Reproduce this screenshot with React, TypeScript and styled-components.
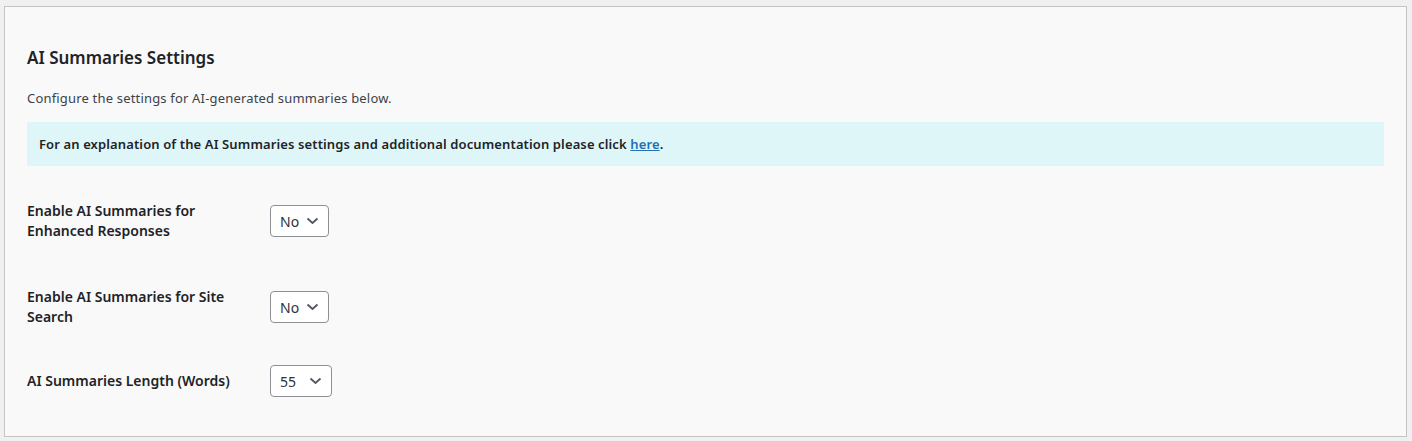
import React from "react";
import styled, { createGlobalStyle } from "styled-components";

const GlobalStyle = createGlobalStyle`
  html, body {
    margin: 0;
    padding: 0;
    background: #f0f0f1;
  }
  body {
    font-family: "Noto Sans", "Liberation Sans", sans-serif;
    color: #3c434a;
  }
`;

const Panel = styled.div`
  box-sizing: border-box;
  height: 431px;
  margin: 6px 5px 4px 4px;
  padding: 0 22px;
  background: #f9f9f9;
  border: 1px solid #c3c4c7;
`;

const Title = styled.h2`
  margin: 0;
  padding-top: 39px;
  font-size: 17px;
  line-height: 24px;
  font-weight: 600;
  color: #1d2327;
`;

const Intro = styled.p`
  margin: 18px 0 0;
  font-size: 13px;
  line-height: 20px;
  letter-spacing: 0.18px;
  color: #3c434a;
`;

const Notice = styled.div`
  margin-top: 14px;
  padding: 12px 12px;
  background: #dff6f9;
  font-size: 13px;
  line-height: 20px;
  letter-spacing: 0.12px;
  font-weight: 600;
  color: #1d2327;

  a {
    color: #2271b1;
    text-decoration: underline;
  }
`;

const Form = styled.div`
  padding-top: 35px;
`;

const Row = styled.div<{ $space: number }>`
  display: grid;
  grid-template-columns: 232px auto;
  column-gap: 11px;
  align-items: center;
  justify-content: start;
  min-height: 40px;
  margin-top: ${(p) => p.$space}px;
`;

const Label = styled.label`
  font-size: 14px;
  line-height: 20px;
  font-weight: 600;
  color: #1d2327;
`;

const LabelText = styled.span<{ $wrap: number }>`
  display: block;
  max-width: ${(p) => p.$wrap}px;
`;

const Select = styled.div<{ $width: number }>`
  box-sizing: border-box;
  display: inline-flex;
  align-items: center;
  justify-content: space-between;
  width: ${(p) => p.$width}px;
  height: 32px;
  padding: 0 9px 0 9px;
  background: #fff;
  border: 1px solid #8c8f94;
  border-radius: 4px;
  font-size: 14px;
  color: #2c3338;
  cursor: pointer;
`;

const Chevron = () => (
  <svg width="13" height="8" viewBox="0 0 13 8" fill="none">
    <path d="M1.5 1.5 L6.5 6 L11.5 1.5" stroke="#50575e" strokeWidth="1.8" />
  </svg>
);

const settings = [
  { label: "Enable AI Summaries for Enhanced Responses", value: "No", width: 59, space: 0, wrap: 200 },
  { label: "Enable AI Summaries for Site Search", value: "No", width: 59, space: 46, wrap: 210 },
  { label: "AI Summaries Length (Words)", value: "55", width: 62, space: 34, wrap: 232 },
];

export default function App() {
  return (
    <>
      <GlobalStyle />
      <Panel>
        <Title>AI Summaries Settings</Title>
        <Intro>Configure the settings for AI-generated summaries below.</Intro>
        <Notice>
          For an explanation of the AI Summaries settings and additional documentation please click{" "}
          <a href="#">here</a>.
        </Notice>
        <Form>
          {settings.map((s) => (
            <Row key={s.label} $space={s.space}>
              <Label>
                <LabelText $wrap={s.wrap}>{s.label}</LabelText>
              </Label>
              <Select $width={s.width}>
                <span>{s.value}</span>
                <Chevron />
              </Select>
            </Row>
          ))}
        </Form>
      </Panel>
    </>
  );
}
